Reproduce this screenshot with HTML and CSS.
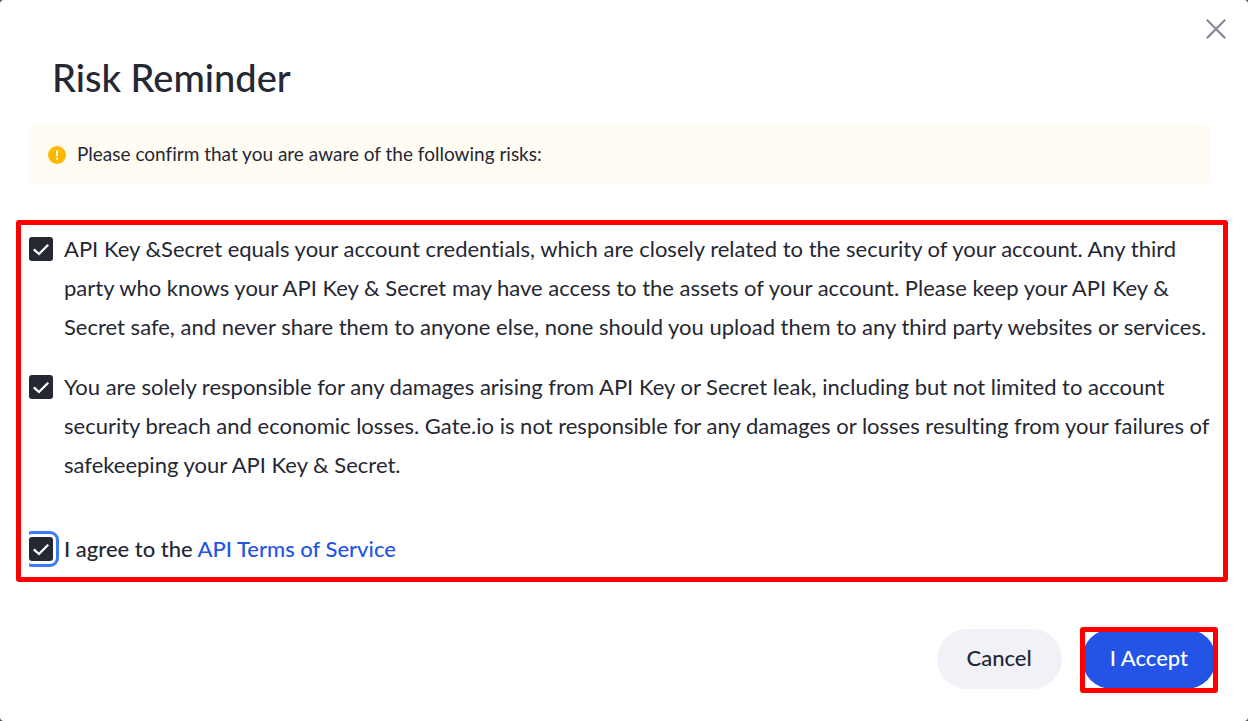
FILE: index.html
```html
<!DOCTYPE html>
<html lang="en">

<head>
    <meta charset="UTF-8">
    <meta name="viewport" content="width=device-width, initial-scale=1.0">
    <title>Risk Reminder</title>

    <link rel="stylesheet" href="styles.css">
</head>

<body>
    <div class="dialog" role="dialog" aria-labelledby="title">
        <button class="close" aria-label="Close">
            <svg width="22" height="22" viewBox="0 0 22 22">
                <path d="M1.8 1.8 L20.2 20.2 M20.2 1.8 L1.8 20.2" fill="none" stroke="#84899a" stroke-width="2.2" />
            </svg>
        </button>

        <h1 class="title" id="title">Risk Reminder</h1>

        <div class="notice">
            <svg width="18" height="18" viewBox="0 0 18 18">
                <circle cx="9" cy="9" r="9" fill="#ffb800" />
                <path d="M9 4.2 V10.2" stroke="#fff" stroke-width="1.8" />
                <path d="M9 11.8 V13.6" stroke="#fff" stroke-width="1.8" />
            </svg>
            <span>Please confirm that you are aware of the following risks:</span>
        </div>

        <div class="risks">
            <div class="risk">
                <input type="checkbox" id="risk-key" checked>
                <label for="risk-key">API Key &amp;Secret equals your account credentials, which are closely related to the security of your account. Any third<br> party who knows your API Key &amp; Secret may have access to the assets of your account. Please keep your API Key &amp;<br> Secret safe, and never share them to anyone else, none should you upload them to any third party websites or services.</label>
            </div>
            <div class="risk">
                <input type="checkbox" id="risk-leak" checked>
                <label for="risk-leak">You are solely responsible for any damages arising from API Key or Secret leak, including but not limited to account<br> security breach and economic losses. Gate.io is not responsible for any damages or losses resulting from your failures of<br> safekeeping your API Key &amp; Secret.</label>
            </div>
            <div class="risk agree">
                <input type="checkbox" id="agree" class="focused" checked>
                <label for="agree">I agree to the <a href="#">API Terms of Service</a></label>
            </div>
        </div>

        <div class="actions">
            <button class="btn">Cancel</button>
            <button class="btn btn-primary">I Accept</button>
        </div>
    </div>
</body>

</html>
```

FILE: styles.css
```css
* {
    box-sizing: border-box;
}

body {
    margin: 0;
    background-color: #4a4a4a;
    font-family: Lato, 'Liberation Sans', sans-serif;
    font-variant-ligatures: none;
    color: #252733;
}

.dialog {
    position: relative;
    min-height: 100vh;
    padding: 53px 20px 28px 16px;
    background-color: #fff;
    border-radius: 4px;
}

.close {
    position: absolute;
    top: 18px;
    right: 21px;
    padding: 0;
    border: none;
    background: none;
    cursor: pointer;
}

.close svg {
    display: block;
}

.title {
    margin: 0 36px 24px;
    font-size: 38px;
    line-height: 48px;
    font-weight: 500;
}

.notice {
    display: flex;
    align-items: center;
    gap: 11px;
    height: 60px;
    margin: 0 18px 35px 13px;
    padding: 0 19px;
    border-radius: 4px;
    background-color: #fffcf3;
    font-size: 19px;
    line-height: 24px;
}

.notice span {
    padding-bottom: 2px;
}

.risks {
    padding: 4px 0 9px 8px;
    border: 5px solid #ff0000;
    border-radius: 3px;
}

.risk {
    display: flex;
    align-items: flex-start;
    gap: 11px;
    margin-bottom: 21px;
    font-size: 22px;
    line-height: 39px;
    white-space: nowrap;
}

.risk input {
    appearance: none;
    flex: none;
    width: 24px;
    height: 24px;
    margin: 8px 0 0;
    border-radius: 3px;
    background: #252733 url("data:image/svg+xml,%3Csvg xmlns='http://www.w3.org/2000/svg' viewBox='0 0 24 24'%3E%3Cpath d='M4.8 12.3 L10 17 L19.2 7.8' fill='none' stroke='%23fff' stroke-width='2.3'/%3E%3C/svg%3E") center / 24px 24px;
}

.risk .focused {
    outline: 3px solid #3f7af5;
    outline-offset: 3px;
}

.agree {
    margin: 45px 0 0;
    overflow: hidden;
}

.agree label {
    font-weight: 500;
}

.agree a {
    color: #2354e6;
    text-decoration: none;
}

.actions {
    display: flex;
    justify-content: flex-end;
    gap: 20px;
    margin-top: 47px;
    padding-right: 12px;
}

.btn {
    position: relative;
    height: 60px;
    padding: 0 30px 3px;
    border: none;
    border-radius: 30px;
    background-color: #f1f2f7;
    color: #252733;
    font-family: inherit;
    font-size: 22px;
    font-weight: 500;
    cursor: pointer;
}

.btn-primary {
    padding: 0 28px 3px;
    background-color: #2354e6;
    color: #fff;
}

.btn-primary::after {
    content: '';
    position: absolute;
    inset: -2px -2px -4px;
    border: 5px solid #ff0000;
    border-radius: 3px;
}
```
